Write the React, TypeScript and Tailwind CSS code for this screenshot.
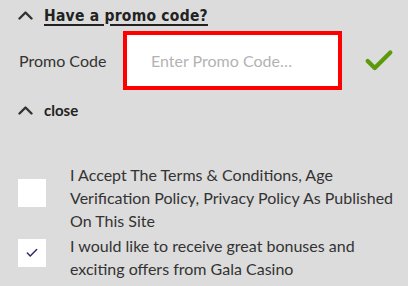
import { Check } from "lucide-react";

function Chevron() {
  return (
    <svg width="15" height="9" viewBox="0 0 15 9" className="shrink-0">
      <polyline points="1.5,7.5 7.5,1.5 13.5,7.5" fill="none" stroke="#333" strokeWidth="2.4" strokeLinecap="round" strokeLinejoin="round" />
    </svg>
  );
}

export default function App() {
  return (
    <div className="w-[408px] h-[286px] overflow-hidden bg-[#dcdcdc] text-[#333] font-['Lato',sans-serif]">
      <div className="flex items-center gap-[11px] pl-[18px] pt-[4px] h-[27px]">
        <Chevron />
        <span className="text-[16px] font-bold tracking-[0.3px] underline underline-offset-[3px] decoration-[2px] text-[#222] font-['DejaVu_Sans',sans-serif] scale-x-[0.87] origin-left whitespace-nowrap">
          Have a promo code?
        </span>
      </div>

      <div className="flex items-center mt-[4px] h-[59px]">
        <span className="pl-[19px] w-[123px] text-[16px] text-[#333]">Promo Code</span>
        <input
          className="w-[219px] h-[59px] border-[4px] border-[#ff0000] bg-white pl-[24px] text-[16px] outline-none placeholder:text-[#b3b3b3]"
          placeholder="Enter Promo Code…"
        />
        <Check size={34} strokeWidth={3} className="ml-[20px] text-[#5c9a0a]" />
      </div>

      <div className="flex items-center gap-[11px] pl-[18px] mt-[8px] h-[24px]">
        <Chevron />
        <span className="text-[15px] font-bold text-[#222]">close</span>
      </div>

      <div className="flex items-center mt-[41px] pl-[18px]">
        <div className="w-[28px] h-[28px] bg-white shrink-0 mb-[10px]" />
        <p className="ml-[24px] w-[330px] text-[16px] leading-[23px] text-[#333]">
          I Accept The Terms &amp; Conditions, Age Verification Policy, Privacy Policy As Published On This Site
        </p>
      </div>

      <div className="flex items-center mt-[2px] pl-[18px]">
        <div className="w-[28px] h-[28px] bg-white shrink-0 mb-[8px] flex items-center justify-center">
          <Check size={14} strokeWidth={2.5} className="text-[#2a2a6a]" />
        </div>
        <p className="ml-[24px] w-[330px] text-[16px] leading-[23px] text-[#333]">
          I would like to receive great bonuses and exciting offers from Gala Casino
        </p>
      </div>
    </div>
  );
}
